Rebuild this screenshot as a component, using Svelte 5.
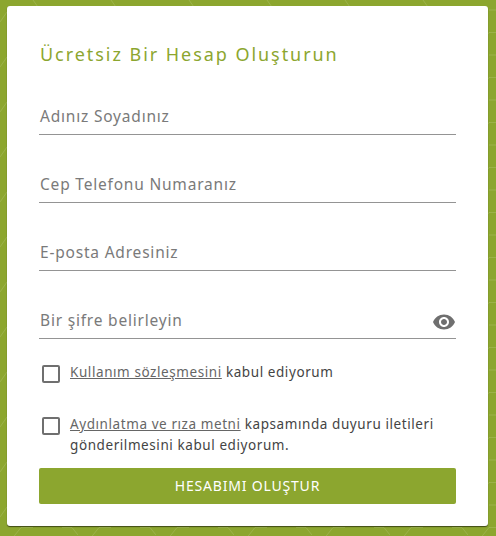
<script>
  const fields = ['Adınız Soyadınız', 'Cep Telefonu Numaranız', 'E-posta Adresiniz'];
</script>

<div class="page">
  <svg class="pattern" width="496" height="536" aria-hidden="true">
    <defs>
      <pattern id="hex" width="78" height="45" patternUnits="userSpaceOnUse">
        <path d="M11 45 L21 32.5 H33 M21 10 H33 M62 32.5 H72 L78 40 M0 22 L7 12 M33 0 L40 10" fill="none" stroke="#fff" stroke-opacity=".13" stroke-width="1"/>
      </pattern>
    </defs>
    <rect width="496" height="536" fill="url(#hex)"/>
  </svg>
  <form class="card">
    <h1>Ücretsiz Bir Hesap Oluşturun</h1>
    {#each fields as f}
      <div class="field"><span>{f}</span></div>
    {/each}
    <div class="field pw">
      <span>Bir şifre belirleyin</span>
      <svg viewBox="0 0 24 24" width="24" height="24" fill="#6f6f6f"><path d="M12 4.5C7 4.5 2.73 7.61 1 12c1.73 4.39 6 7.5 11 7.5s9.27-3.11 11-7.5c-1.73-4.39-6-7.5-11-7.5zM12 17c-2.76 0-5-2.24-5-5s2.24-5 5-5 5 2.24 5 5-2.24 5-5 5zm0-8c-1.66 0-3 1.34-3 3s1.34 3 3 3 3-1.34 3-3-1.34-3-3-3z"/></svg>
    </div>
    <div class="check first">
      <i class="box"></i>
      <p><u>Kullanım sözleşmesini</u> kabul ediyorum</p>
    </div>
    <div class="check second">
      <i class="box"></i>
      <p><u>Aydınlatma ve rıza metni</u> kapsamında duyuru iletileri gönderilmesini kabul ediyorum.</p>
    </div>
    <button type="button">HESABIMI OLUŞTUR</button>
  </form>
</div>

<style>
  :global(body) { margin: 0; }
  .page {
    position: relative;
    width: 496px;
    height: 536px;
    background: #8ca62f;
    overflow: hidden;
    padding: 6px 8px 10px 7px;
    box-sizing: border-box;
    font-family: "Noto Sans", sans-serif;
  }
  .pattern { position: absolute; left: 0; top: 0; }
  .card {
    position: relative;
    height: 520px;
    box-sizing: border-box;
    background: #fff;
    border-radius: 3px;
    box-shadow: 0 1px 1px rgba(0,0,0,.55);
    padding: 35px 32px 0;
    display: flex;
    flex-direction: column;
  }
  h1 {
    margin: 0 0 23px 1px;
    font-size: 18px;
    line-height: 27px;
    font-weight: 400;
    letter-spacing: 1.95px;
    color: #8ca62f;
  }
  .field {
    height: 43px;
    margin-bottom: 24px;
    padding-left: 1px;
    border-bottom: 1px solid #949494;
    display: flex;
    align-items: flex-end;
    justify-content: space-between;
    box-sizing: content-box;
    color: #7a7a7a;
    font-size: 15.5px;
    line-height: 20px;
    letter-spacing: .8px;
  }
  .field span { padding-bottom: 8px; }
  .field.pw { margin-bottom: 0; }
  .field svg { margin: 0 0 4px 0; }
  .check { display: flex; gap: 10px; align-items: flex-start; color: #444; font-size: 13.5px; line-height: 21px; letter-spacing: .58px; }
  .check.first { margin-top: 23px; height: 21px; }
  .check.second { margin-top: 31px; height: 42px; }
  .box {
    flex: none;
    margin: 3px 0 0 3px;
    border: 2px solid #6f6f6f;
    border-radius: 2px;
    box-sizing: content-box;
    width: 14px;
    height: 14px;
  }
  p { margin: 0; }
  u { color: #666; }
  button {
    margin-top: 12px;
    height: 36px;
    padding: 0 0 2px;
    border: 0;
    border-radius: 2px;
    background: #8ca62f;
    color: #fff;
    font: 400 14px "Noto Sans", sans-serif;
    letter-spacing: .8px;
  }
</style>
